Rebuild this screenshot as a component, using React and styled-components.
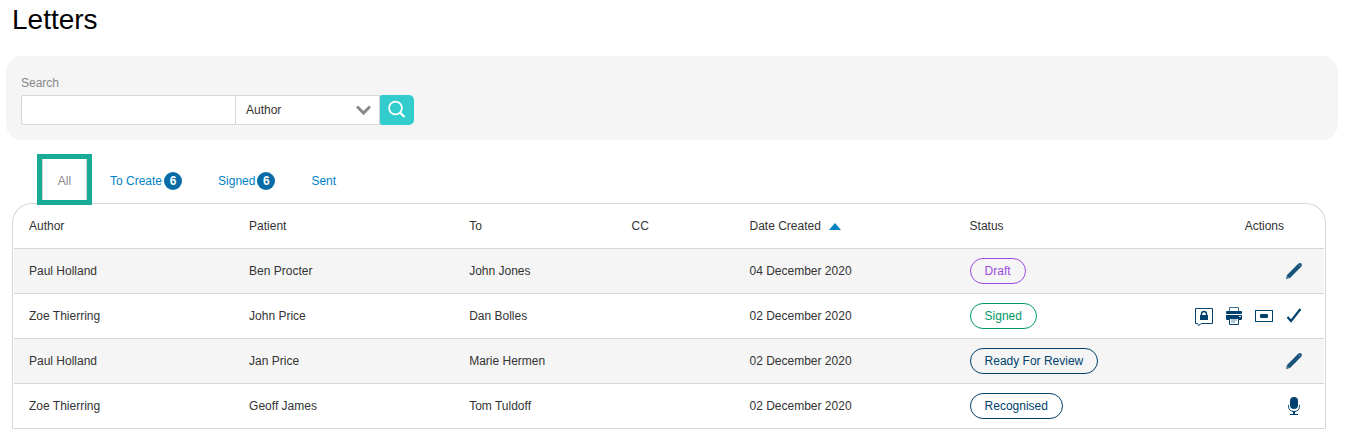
import React, { useState } from 'react';
import styled, { createGlobalStyle } from 'styled-components';

const GlobalStyle = createGlobalStyle`
  * {
    box-sizing: border-box;
  }

  body {
    margin: 0;
    background-color: #ffffff;
    color: #333333;
    font-family: 'Liberation Sans', Arial, sans-serif;
    font-size: 12px;
    line-height: 16px;
  }

  button,
  input,
  select {
    font: inherit;
  }
`;

const Page = styled.main`
  padding: 4px 11px 0 6px;
`;

const Title = styled.h1`
  margin: 0 0 20px;
  padding-left: 6px;
  color: #000000;
  font-size: 28px;
  font-weight: 400;
  line-height: 32px;
`;

const SearchPanel = styled.form`
  padding: 19px 15px 15px;
  border-radius: 16px;
  background-color: #f5f5f5;
`;

const SearchLabel = styled.label`
  display: block;
  margin-bottom: 4px;
  color: #888888;
`;

const SearchRow = styled.div`
  display: flex;
  height: 30px;
`;

const SearchInput = styled.input`
  width: 215px;
  padding: 0 10px;
  border: 1px solid #d6d6d6;
  border-radius: 2px 0 0 2px;
  background-color: #ffffff;
`;

const SelectWrap = styled.div`
  position: relative;
  width: 144px;
`;

const FieldSelect = styled.select`
  width: 100%;
  height: 100%;
  padding: 0 32px 0 10px;
  border: 1px solid #d6d6d6;
  border-left: none;
  border-radius: 0;
  background-color: #ffffff;
  color: #333333;
  appearance: none;
`;

const Chevron = styled.svg`
  position: absolute;
  top: 10px;
  right: 9px;
  pointer-events: none;
`;

const SearchButton = styled.button`
  display: flex;
  align-items: center;
  justify-content: center;
  width: 34px;
  padding: 0;
  border: none;
  border-radius: 2px 5px 5px 2px;
  background-color: #33cccc;
  cursor: pointer;
`;

const Tabs = styled.nav`
  position: relative;
  display: flex;
  margin: 14px 0 -2px 31px;
`;

const Tab = styled.a`
  display: flex;
  align-items: center;
  justify-content: center;
  gap: 2px;
  min-width: 55px;
  height: 51px;
  padding: 3px ${props => (props.$active ? '12px' : '18px')} 0;
  border: ${props => (props.$active ? '5px solid #18ab97' : 'none')};
  box-shadow: ${props => (props.$active ? 'inset 1px 0 #d6d6d6, inset -1px 0 #d6d6d6' : 'none')};
  background-color: ${props => (props.$active ? '#ffffff' : 'transparent')};
  color: ${props => (props.$active ? '#888888' : '#0083c6')};
  text-decoration: none;
`;

const Badge = styled.span`
  width: 18px;
  border-radius: 9px;
  background-color: #076ca6;
  color: #ffffff;
  font-weight: 700;
  line-height: 18px;
  text-align: center;
`;

const Card = styled.section`
  margin: 0 12px 0 6px;
  padding: 0 1px;
  border: 1px solid #d6d6d6;
  border-bottom: none;
  border-radius: 20px 20px 0 0;
`;

const Table = styled.table`
  width: 100%;
  table-layout: fixed;
  border-collapse: separate;
  border-spacing: 0;
`;

const HeadCell = styled.th`
  width: ${props => props.$width || 'auto'};
  height: 45px;
  padding: 0 ${props => (props.$right ? '40px' : '0')} 0 15px;
  border-bottom: 1px solid #d6d6d6;
  font-weight: 400;
  text-align: ${props => (props.$right ? 'right' : 'left')};
`;

const Row = styled.tr`
  &:nth-child(odd) {
    background-color: #f5f5f5;
  }
`;

const Cell = styled.td`
  height: 45px;
  padding: 0 0 0 15px;
  border-bottom: 1px solid #d6d6d6;
`;

const SortArrow = styled.svg`
  margin-left: 8px;
`;

const Status = styled.span`
  display: inline-block;
  padding: 0 14px;
  border: 1px solid ${props => props.$color};
  border-radius: 13px;
  color: ${props => props.$color};
  line-height: 24px;
  vertical-align: middle;
`;

const Actions = styled.div`
  display: flex;
  justify-content: flex-end;
  gap: 12px;
  padding-right: 21px;
`;

const ActionButton = styled.button`
  display: flex;
  padding: 0;
  border: none;
  background: none;
  color: #00426d;
  cursor: pointer;
`;

const icons = {
  edit: (
    <>
      <path d="M1 18L2 14L13.2 2.8Q14.8 1.4 16.4 2.6Q17.6 4.2 16.2 5.8L5 17Z" fill="currentColor" opacity="0.9" />
      <path d="M14 4L15 5" stroke="#8fb0c6" strokeWidth="1" />
      <path d="M2 15.4L3.6 17" stroke="#8fb0c6" strokeWidth="1" />
    </>
  ),
  lock: (
    <>
      <path d="M0.5 2.5H17.5V17.5H6.5L3.5 19.5L2.5 17.5H0.5Z" fill="none" stroke="currentColor" />
      <path d="M6.5 9.5V8Q6.5 5.5 9 5.5T11.5 8V9.5" fill="none" stroke="currentColor" strokeWidth="1.4" />
      <rect x="5" y="9" width="8" height="5" fill="currentColor" />
    </>
  ),
  print: (
    <>
      <path d="M4.5 5V1.5H13.5V5" fill="none" stroke="currentColor" opacity="0.75" />
      <rect x="1" y="5" width="16" height="3" rx="1" fill="currentColor" />
      <path d="M1 9H17V13Q17 14 16 14H2Q1 14 1 13Z" fill="currentColor" />
      <rect x="14" y="10" width="2" height="1" fill="#ffffff" />
      <path d="M4.5 12.5H13.5V18.5H4.5Z" fill="#ffffff" stroke="currentColor" />
      <path d="M6 13H12V15H10V17H6Z" fill="currentColor" opacity="0.3" />
    </>
  ),
  envelope: (
    <>
      <rect x="0.5" y="4.5" width="17" height="11" fill="none" stroke="currentColor" />
      <rect x="5" y="8" width="8" height="4" rx="1" fill="currentColor" />
    </>
  ),
  check: <path d="M2.5 11L6 15L15.5 3" fill="none" stroke="currentColor" strokeWidth="2.2" />,
  dictate: (
    <>
      <rect x="5" y="1" width="8" height="12" rx="4" fill="currentColor" />
      <path d="M3.5 9V10.5Q4 15.5 9 15.5T14.5 10.5V9" fill="none" stroke="currentColor" />
      <path d="M9 15V18" stroke="currentColor" strokeWidth="2" />
      <path d="M5 18.5H13" stroke="currentColor" />
    </>
  ),
};

const actionLabels = {
  edit: 'Edit letter',
  lock: 'Private note',
  print: 'Print',
  envelope: 'Send',
  check: 'Mark as done',
  dictate: 'Dictate',
};

const columns = [
  { label: 'Author', width: '16.8%' },
  { label: 'Patient', width: '16.8%' },
  { label: 'To', width: '12.4%' },
  { label: 'CC', width: '9%' },
  { label: 'Date Created', width: '16.8%', sorted: true },
  { label: 'Status', width: '16.8%' },
  { label: 'Actions', right: true },
];

const statusColors = {
  Draft: '#9b4be0',
  Signed: '#009966',
  'Ready For Review': '#00426d',
  Recognised: '#00426d',
};

const letters = [
  { id: 1, author: 'Paul Holland', patient: 'Ben Procter', to: 'John Jones', date: '04 December 2020', status: 'Draft', actions: ['edit'] },
  { id: 2, author: 'Zoe Thierring', patient: 'John Price', to: 'Dan Bolles', date: '02 December 2020', status: 'Signed', actions: ['lock', 'print', 'envelope', 'check'] },
  { id: 3, author: 'Paul Holland', patient: 'Jan Price', to: 'Marie Hermen', date: '02 December 2020', status: 'Ready For Review', actions: ['edit'] },
  { id: 4, author: 'Zoe Thierring', patient: 'Geoff James', to: 'Tom Tuldoff', date: '02 December 2020', status: 'Recognised', actions: ['dictate'] },
];

const tabs = [
  { label: 'All' },
  { label: 'To Create', count: 6 },
  { label: 'Signed', count: 6 },
  { label: 'Sent' },
];

const App = () => {
  const [activeTab, setActiveTab] = useState('All');
  const [query, setQuery] = useState('');

  const handleTab = (e, label) => {
    e.preventDefault();
    setActiveTab(label);
  };

  return (
    <>
      <GlobalStyle />
      <Page>
        <Title>Letters</Title>

        <SearchPanel onSubmit={e => e.preventDefault()}>
          <SearchLabel htmlFor="search">Search</SearchLabel>
          <SearchRow>
            <SearchInput id="search" value={query} onChange={e => setQuery(e.target.value)} />
            <SelectWrap>
              <FieldSelect aria-label="Search by" defaultValue="Author">
                <option>Author</option>
                <option>Patient</option>
              </FieldSelect>
              <Chevron width="15" height="10" viewBox="0 0 15 10" aria-hidden="true">
                <path d="M1 1.5L7.5 8L14 1.5" fill="none" stroke="#888888" strokeWidth="3" />
              </Chevron>
            </SelectWrap>
            <SearchButton type="submit" aria-label="Search letters">
              <svg width="20" height="20" viewBox="0 0 20 20" fill="none" stroke="#ffffff" strokeWidth="1.8" aria-hidden="true">
                <circle cx="8.5" cy="8" r="6.4" />
                <path d="M13 12.5L17.5 17" strokeWidth="2.2" />
              </svg>
            </SearchButton>
          </SearchRow>
        </SearchPanel>

        <Tabs>
          {tabs.map(tab => (
            <Tab
              key={tab.label}
              href="#"
              $active={tab.label === activeTab}
              onClick={e => handleTab(e, tab.label)}
            >
              {tab.label}
              {tab.count && <Badge>{tab.count}</Badge>}
            </Tab>
          ))}
        </Tabs>

        <Card>
          <Table>
            <thead>
              <tr>
                {columns.map(column => (
                  <HeadCell key={column.label} scope="col" $width={column.width} $right={column.right}>
                    {column.label}
                    {column.sorted && (
                      <SortArrow width="12" height="7" viewBox="0 0 12 7" aria-hidden="true">
                        <path d="M0 7L6 0L12 7Z" fill="#0083c6" />
                      </SortArrow>
                    )}
                  </HeadCell>
                ))}
              </tr>
            </thead>
            <tbody>
              {letters.map(letter => (
                <Row key={letter.id}>
                  <Cell>{letter.author}</Cell>
                  <Cell>{letter.patient}</Cell>
                  <Cell>{letter.to}</Cell>
                  <Cell />
                  <Cell>{letter.date}</Cell>
                  <Cell>
                    <Status $color={statusColors[letter.status]}>{letter.status}</Status>
                  </Cell>
                  <Cell>
                    <Actions>
                      {letter.actions.map(action => (
                        <ActionButton key={action} type="button" aria-label={actionLabels[action]}>
                          <svg width="18" height="20" viewBox="0 0 18 20" aria-hidden="true">
                            {icons[action]}
                          </svg>
                        </ActionButton>
                      ))}
                    </Actions>
                  </Cell>
                </Row>
              ))}
            </tbody>
          </Table>
        </Card>
      </Page>
    </>
  );
};

export default App;
